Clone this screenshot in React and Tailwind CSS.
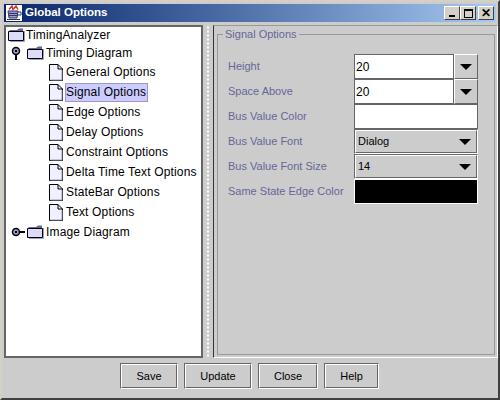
import React from 'react';

const Folder = () => (
  <svg width="17" height="14" viewBox="0 0 17 14" className="shrink-0">
    <path d="M0.5 3.5 H15.5 V12.5 H0.5 Z" fill="#dcdcf8" stroke="#000" />
    <path d="M1 3 L2 2 H9 L11 0.5 H15 V3 Z" fill="#666699" />
    <path d="M16.5 3 V13.5 H2" fill="none" stroke="#9999cc" />
  </svg>
);

const Leaf = () => (
  <svg width="14" height="17" viewBox="0 0 14 17" className="shrink-0">
    <path d="M0.5 0.5 H9 L13.5 5 V16.5 H0.5 Z" fill="#f0f0ff" stroke="#000" />
    <path d="M9 0.5 V5 H13.5" fill="none" stroke="#000" />
    <path d="M1.5 16 H13 V6" fill="none" stroke="#9999cc" />
  </svg>
);

const HandleOpen = () => (
  <svg width="12" height="14" viewBox="0 0 12 14" className="shrink-0">
    <circle cx="5" cy="5" r="3.5" fill="#9999cc" stroke="#000" strokeWidth="1.5" />
    <rect x="4" y="4" width="2" height="2" fill="#000" />
    <rect x="4" y="8" width="2" height="6" fill="#000" />
  </svg>
);

const HandleClosed = () => (
  <svg width="14" height="10" viewBox="0 0 14 10" className="shrink-0">
    <circle cx="5" cy="5" r="3.5" fill="#9999cc" stroke="#000" strokeWidth="1.5" />
    <rect x="4" y="4" width="2" height="2" fill="#000" />
    <rect x="8" y="4" width="6" height="2" fill="#000" />
  </svg>
);

const Arrow = () => <div className="w-0 h-0 border-x-[6px] border-x-transparent border-t-[6px] border-t-black" />;

// java cup from the title bar
const JavaLogo = () => (
  <svg width="16" height="16" viewBox="0 0 16 16" className="shrink-0">
    <rect width="16" height="16" fill="#fff" />
    <path d="M2 6 H12 L11 13 H3 Z" fill="#9999cc" stroke="#333366" />
    <path d="M3 8.5 H11 M3 10.5 H11" stroke="#333366" />
    <path d="M12 7 H15 V10 H11.5" fill="none" stroke="#333366" />
    <path d="M1 14.5 H14" stroke="#333366" />
    <path d="M3 4.5 L6 1 L7 4.5 L10 1 L12 4.5" stroke="#cc3333" strokeWidth="1.5" fill="none" />
  </svg>
);

const WinBtn = ({ children, className = '' }) => (
  <div className={`w-4 h-[14px] bg-[#d4d0c8] border border-t-white border-l-white border-r-[#404040] border-b-[#404040] flex items-center justify-center ${className}`}>
    {children}
  </div>
);

const treeRow = 'flex items-center h-5';

const leaves = ['General Options', 'Signal Options', 'Edge Options', 'Delay Options', 'Constraint Options', 'Delta Time Text Options', 'StateBar Options', 'Text Options'];

const Field = ({ children, className = '' }) => (
  <div className={`h-[25px] border border-t-[#666666] border-l-[#666666] border-r-white border-b-white ${className}`}>
    <div className="h-full border border-t-white border-l-white border-r-[#666666] border-b-[#666666] flex items-center justify-between">
      {children}
    </div>
  </div>
);

const Editable = ({ value }) => (
  <div className="flex h-[25px]">
    <div className="w-[100px] border border-[#666666] bg-white flex items-center pl-[1px]">{value}</div>
    <div className="flex-1 border border-[#666666] border-t-white border-l-white flex items-center justify-center"><Arrow /></div>
  </div>
);

const Button = ({ label, width }) => (
  <button className={`${width} h-[26px] border border-t-[#666666] border-l-[#666666] border-r-white border-b-white`}>
    <div className="h-full border border-t-white border-l-white border-r-[#666666] border-b-[#666666] flex items-center justify-center text-black">{label}</div>
  </button>
);

export default function App() {
  const labels = ['Height', 'Space Above', 'Bus Value Color', 'Bus Value Font', 'Bus Value Font Size', 'Same State Edge Color'];
  return (
    <div className="w-[500px] h-[400px] bg-[#cccccc] text-[11px] font-['Liberation_Sans',sans-serif] border-2 border-t-[#d4d0c8] border-l-[#d4d0c8] border-r-[#404040] border-b-[#404040] flex flex-col overflow-hidden">
      <div className="mx-[2px] mt-[2px] h-[18px] shrink-0 bg-gradient-to-r from-[#0a246a] to-[#a6caf0] flex items-center pl-[2px] pr-[2px] text-white font-bold">
        <JavaLogo />
        <span className="ml-[3px] text-[11.5px]">Global Options</span>
        <div className="ml-auto flex">
          <WinBtn className="items-end pb-[2px]"><div className="w-[6px] h-[2px] bg-black" /></WinBtn>
          <WinBtn><div className="w-[9px] h-[9px] border border-t-2 border-black" /></WinBtn>
          <WinBtn className="ml-[2px]"><span className="text-black text-[12px] leading-none">✕</span></WinBtn>
        </div>
      </div>

      <div className="flex-1 min-h-0 flex mt-[3px] pl-[2px]">
        <div className="w-[199px] bg-white border-2 border-[#666666] pl-[1px] overflow-hidden text-[12px] tracking-[0.15px]">
          <div className={`${treeRow} h-[16px] gap-[1px] pl-[1px]`}><Folder /><span>TimingAnalyzer</span></div>
          <div className={`${treeRow} h-[19px] pl-[4px]`}><HandleOpen /><div className="ml-[4px]"><Folder /></div><span className="ml-[2px]">Timing Diagram</span></div>
          {leaves.map(item => (
            <div key={item} className={`${treeRow} pl-[42px]`}>
              <Leaf />
              <span className={`ml-[2px] pr-[1px] h-[19px] flex items-center ${item === 'Signal Options' ? 'bg-[#ccccff] border border-[#9999cc]' : 'border border-transparent'}`}>{item}</span>
            </div>
          ))}
          <div className={`${treeRow} pl-[4px]`}><HandleClosed /><div className="ml-[2px]"><Folder /></div><span className="ml-[2px]">Image Diagram</span></div>
        </div>

        <div className="w-[10px] shrink-0 bg-[radial-gradient(#ffffff_1px,transparent_1px)] bg-[length:4px_4px] bg-center bg-repeat-y" />

        <div className="flex-1 border-l border-l-[#333333] border-t border-t-[#999999] border-b border-b-white border-r border-r-white pl-[3px] pr-[2px] pt-[1px] pb-[2px]">
          <fieldset className="h-full border border-[#999999] pl-[9px] pr-[12px] rounded-none">
            <legend className="-ml-[4px] px-[2px] text-[#666699] leading-[14px]">Signal Options</legend>
            <div className="grid grid-cols-[127px_124px] mt-[13px] text-[#666699]">
              {labels.map((label, i) => (
                <div key={label} className="h-[25px] flex items-center pl-[1px] col-start-1" style={{ gridRow: i + 1 }}>{label}</div>
              ))}
              <div className="col-start-2 row-start-1 text-black text-[12px]"><Editable value="20" /></div>
              <div className="col-start-2 row-start-2 text-black text-[12px]"><Editable value="20" /></div>
              <div className="col-start-2 row-start-3"><div className="h-[25px] bg-white border border-[#666666]" /></div>
              <div className="col-start-2 row-start-4 text-black"><Field><span className="pl-[2px]">Dialog</span><span className="pr-[5px]"><Arrow /></span></Field></div>
              <div className="col-start-2 row-start-5 text-black"><Field><span className="pl-[2px]">14</span><span className="pr-[5px]"><Arrow /></span></Field></div>
              <div className="col-start-2 row-start-6"><div className="h-[25px] bg-black border border-white" /></div>
            </div>
          </fieldset>
        </div>
      </div>

      <div className="h-[40px] shrink-0 flex items-start pt-[5px] pr-[1px] justify-center gap-[6px]">
        <Button label="Save" width="w-[58px]" />
        <Button label="Update" width="w-[68px]" />
        <Button label="Close" width="w-[60px]" />
        <Button label="Help" width="w-[55px]" />
      </div>
    </div>
  );
}
